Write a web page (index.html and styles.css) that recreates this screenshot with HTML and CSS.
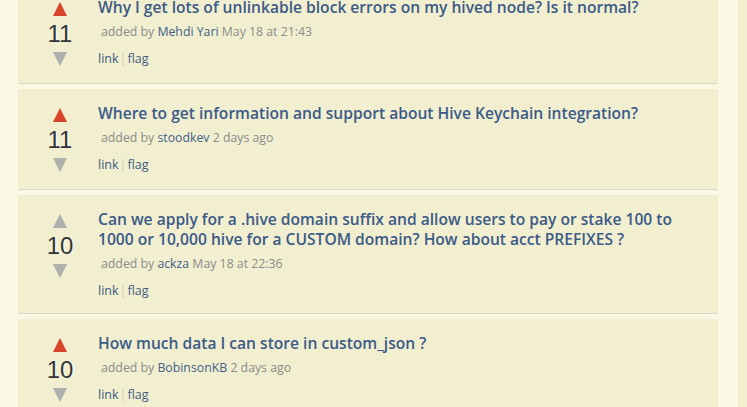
FILE: index.html
```html
<!DOCTYPE html>
<html lang="en">
<head>
<meta charset="utf-8">
<title>Questions</title>
<link rel="stylesheet" href="styles.css">
</head>
<body>
<div class="page">
  <main class="list">
    <article class="question">
      <div class="vote">
        <span class="arrow up voted"></span>
        <span class="score">11</span>
        <span class="arrow down"></span>
      </div>
      <div class="body">
        <h2 class="title"><a href="#">Why I get lots of unlinkable block errors on my hived node? Is it normal?</a></h2>
        <p class="meta">added by <a href="#">Mehdi Yari</a> May 18 at 21:43</p>
        <p class="actions"><a href="#">link</a><span class="sep">|</span><a href="#">flag</a></p>
      </div>
    </article>
    <article class="question">
      <div class="vote">
        <span class="arrow up voted"></span>
        <span class="score">11</span>
        <span class="arrow down"></span>
      </div>
      <div class="body">
        <h2 class="title"><a href="#">Where to get information and support about Hive Keychain integration?</a></h2>
        <p class="meta">added by <a href="#">stoodkev</a> 2 days ago</p>
        <p class="actions"><a href="#">link</a><span class="sep">|</span><a href="#">flag</a></p>
      </div>
    </article>
    <article class="question">
      <div class="vote">
        <span class="arrow up"></span>
        <span class="score">10</span>
        <span class="arrow down"></span>
      </div>
      <div class="body">
        <h2 class="title"><a href="#">Can we apply for a .hive domain suffix and allow users to pay or stake 100 to 1000 or 10,000 hive for a CUSTOM domain? How about acct PREFIXES ?</a></h2>
        <p class="meta">added by <a href="#">ackza</a> May 18 at 22:36</p>
        <p class="actions"><a href="#">link</a><span class="sep">|</span><a href="#">flag</a></p>
      </div>
    </article>
    <article class="question">
      <div class="vote">
        <span class="arrow up voted"></span>
        <span class="score">10</span>
        <span class="arrow down"></span>
      </div>
      <div class="body">
        <h2 class="title"><a href="#">How much data I can store in custom_json ?</a></h2>
        <p class="meta">added by <a href="#">BobinsonKB</a> 2 days ago</p>
        <p class="actions"><a href="#">link</a><span class="sep">|</span><a href="#">flag</a></p>
      </div>
    </article>
  </main>
  <aside class="side"></aside>
</div>
</body>
</html>
```
FILE: styles.css
```css
html, body {
  margin: 0;
  padding: 0;
  background: #faf8e2;
  height: 100%;
  overflow: hidden;
}

body {
  font-family: "Open Sans", "DejaVu Sans", sans-serif;
}

.page {
  display: flex;
  align-items: flex-start;
  padding-left: 18px;
  height: 100%;
}

.list {
  width: 700px;
  margin-top: -17px;
  display: flex;
  flex-direction: column;
  gap: 5px;
}

.side {
  margin-left: 20px;
  flex: 1;
  align-self: stretch;
  background: #f1efcf;
}

.question {
  display: flex;
  background: #f1efcf;
  border-bottom: 1px solid #d9d8c9;
  padding: 14px 20px 13px 20px;
}

.vote {
  width: 44px;
  flex: none;
  display: flex;
  flex-direction: column;
  align-items: center;
  margin-top: 5px;
  padding-bottom: 4px;
}

.arrow {
  display: block;
  width: 0;
  height: 0;
  border-left: 7px solid transparent;
  border-right: 7px solid transparent;
}

.arrow.up {
  border-bottom: 14px solid #b0b0ac;
}

.arrow.up.voted {
  border-bottom-color: #d8432c;
}

.arrow.down {
  border-top: 14px solid #b0b0ac;
}

.score {
  font-family: "Liberation Sans", Arial, sans-serif;
  font-size: 24px;
  line-height: 36px;
  color: #333;
  text-shadow: 1px 0 0 #fff;
}

.body {
  margin-left: 16px;
  flex: 1;
}

.title {
  margin: 0;
  font-size: 15.6px;
  font-weight: 600;
  line-height: 20px;
}

.title a {
  color: #3c5a88;
  text-decoration: none;
}

.meta {
  margin: 6px 0 0 3px;
  font-size: 12.3px;
  line-height: 18px;
  color: #8c8c8a;
}

.meta a {
  color: #43618a;
  text-decoration: none;
}

.actions {
  margin: 9px 0 0 0;
  font-size: 12.5px;
  line-height: 18px;
}

.actions a {
  color: #3e5b82;
  text-decoration: none;
}

.sep {
  color: #cfcdb8;
  margin: 0 1px;
}
```
